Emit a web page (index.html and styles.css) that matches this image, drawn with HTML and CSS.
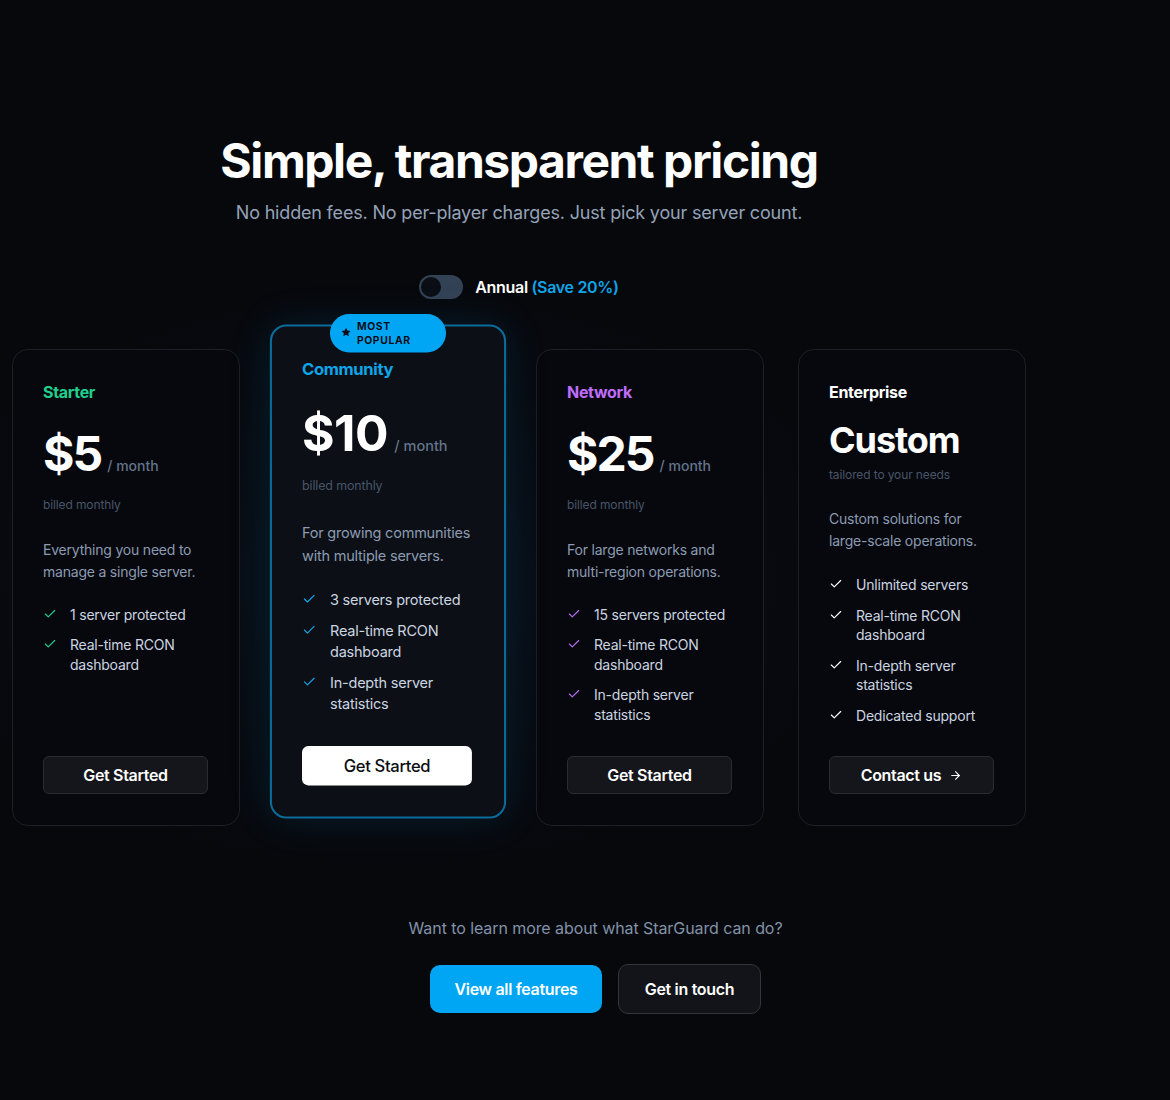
FILE: index.html
```html
<!DOCTYPE html>
<html lang="en">
<head>
<meta charset="utf-8">
<title>Pricing</title>
<link rel="stylesheet" href="styles.css">
</head>
<body>
<main class="page">
  <section class="pricing">
    <header class="intro">
      <h1 class="intro-title">Simple, transparent pricing</h1>
      <p class="intro-sub">No hidden fees. No per-player charges. Just pick your server count.</p>
    </header>

    <div class="billing">
      <span class="switch"><span class="knob"></span></span>
      <span class="billing-label">Annual <span class="save">(Save 20%)</span></span>
    </div>

    <div class="plans">
      <article class="plan plan-starter">
        <h3 class="plan-name">Starter</h3>
        <div class="price-row"><span class="price">$5</span><span class="per">/ month</span></div>
        <p class="billed">billed monthly</p>
        <p class="plan-desc">Everything you need to manage a single server.</p>
        <ul class="features">
          <li><svg class="check" viewBox="0 0 24 24"><polyline points="20 6 9 17 4 12"/></svg><span>1 server protected</span></li>
          <li><svg class="check" viewBox="0 0 24 24"><polyline points="20 6 9 17 4 12"/></svg><span>Real-time RCON dashboard</span></li>
        </ul>
        <a class="btn btn-dark" href="#">Get Started</a>
      </article>

      <article class="plan plan-community">
        <span class="badge"><svg class="star" viewBox="0 0 24 24"><path d="M12 2.5l2.9 6.1 6.6.8-4.9 4.6 1.3 6.6L12 17.3l-5.9 3.3 1.3-6.6-4.9-4.6 6.6-.8z"/></svg><span class="badge-text">Most<br>Popular</span></span>
        <h3 class="plan-name">Community</h3>
        <div class="price-row"><span class="price">$10</span><span class="per">/ month</span></div>
        <p class="billed">billed monthly</p>
        <p class="plan-desc">For growing communities with multiple servers.</p>
        <ul class="features">
          <li><svg class="check" viewBox="0 0 24 24"><polyline points="20 6 9 17 4 12"/></svg><span>3 servers protected</span></li>
          <li><svg class="check" viewBox="0 0 24 24"><polyline points="20 6 9 17 4 12"/></svg><span>Real-time RCON dashboard</span></li>
          <li><svg class="check" viewBox="0 0 24 24"><polyline points="20 6 9 17 4 12"/></svg><span>In-depth server statistics</span></li>
        </ul>
        <a class="btn btn-light" href="#">Get Started</a>
      </article>

      <article class="plan plan-network">
        <h3 class="plan-name">Network</h3>
        <div class="price-row"><span class="price">$25</span><span class="per">/ month</span></div>
        <p class="billed">billed monthly</p>
        <p class="plan-desc">For large networks and multi-region operations.</p>
        <ul class="features">
          <li><svg class="check" viewBox="0 0 24 24"><polyline points="20 6 9 17 4 12"/></svg><span>15 servers protected</span></li>
          <li><svg class="check" viewBox="0 0 24 24"><polyline points="20 6 9 17 4 12"/></svg><span>Real-time RCON dashboard</span></li>
          <li><svg class="check" viewBox="0 0 24 24"><polyline points="20 6 9 17 4 12"/></svg><span>In-depth server statistics</span></li>
        </ul>
        <a class="btn btn-dark" href="#">Get Started</a>
      </article>

      <article class="plan plan-enterprise">
        <h3 class="plan-name">Enterprise</h3>
        <div class="custom">Custom</div>
        <p class="tailored">tailored to your needs</p>
        <p class="plan-desc plan-desc-ent">Custom solutions for large-scale operations.</p>
        <ul class="features features-ent">
          <li><svg class="check" viewBox="0 0 24 24"><polyline points="20 6 9 17 4 12"/></svg><span>Unlimited servers</span></li>
          <li><svg class="check" viewBox="0 0 24 24"><polyline points="20 6 9 17 4 12"/></svg><span>Real-time RCON dashboard</span></li>
          <li><svg class="check" viewBox="0 0 24 24"><polyline points="20 6 9 17 4 12"/></svg><span>In-depth server statistics</span></li>
          <li><svg class="check" viewBox="0 0 24 24"><polyline points="20 6 9 17 4 12"/></svg><span>Dedicated support</span></li>
        </ul>
        <a class="btn btn-dark" href="#">Contact us <svg class="arrow" viewBox="0 0 24 24"><path d="M5 12h14"/><path d="M12 5l7 7-7 7"/></svg></a>
      </article>
    </div>
  </section>

  <section class="cta">
    <p class="cta-text">Want to learn more about what StarGuard can do?</p>
    <div class="cta-actions">
      <a class="cta-btn cta-primary" href="#">View all features</a>
      <a class="cta-btn cta-secondary" href="#">Get in touch</a>
    </div>
  </section>
</main>
</body>
</html>
```

FILE: styles.css
```css
* { box-sizing: border-box; }

html, body {
  margin: 0;
  padding: 0;
  background: #07080c;
}

body {
  font-family: "Inter", "Noto Sans", sans-serif;
  color: #ffffff;
  min-height: 1100px;
}

a { text-decoration: none; }

.page {
  background: radial-gradient(ellipse 700px 420px at 390px 580px, rgba(14, 80, 130, 0.10), rgba(7, 8, 12, 0) 70%), #07080c;
  min-height: 1100px;
}

.pricing {
  width: 1014px;
  margin-left: 12px;
  padding-top: 135px;
}

.intro {
  text-align: center;
}

.intro-title {
  margin: 0;
  font-size: 48px;
  line-height: 52px;
  font-weight: 700;
  letter-spacing: -0.03em;
  color: #ffffff;
}

.intro-sub {
  margin: 12px 0 0;
  font-size: 18px;
  line-height: 28px;
  color: #94a3b8;
  letter-spacing: -0.01em;
}

.billing {
  margin-top: 48px;
  display: flex;
  justify-content: center;
  align-items: center;
  gap: 12px;
}

.switch {
  width: 44px;
  height: 24px;
  border-radius: 12px;
  background: #334155;
  padding: 2px;
  display: flex;
}

.knob {
  width: 20px;
  height: 20px;
  border-radius: 50%;
  background: #0b0e15;
}

.billing-label {
  font-size: 16px;
  font-weight: 600;
  color: #ffffff;
  letter-spacing: -0.02em;
}

.save { color: #0ea5e9; }

.plans {
  margin-top: 50px;
  display: grid;
  grid-template-columns: repeat(4, 228px);
  column-gap: 34px;
}

.plan {
  position: relative;
  display: flex;
  flex-direction: column;
  border: 1px solid #1c1f26;
  border-radius: 16px;
  background: #07080d;
  padding: 30px 30px 31px;
}

.plan-community {
  border: 2px solid #0b6b9a;
  padding: 29px 29px 30px;
  background: #0c0f15;
  transform: translateY(-16px) scale(1.036);
  box-shadow: 0 0 40px rgba(14, 140, 210, 0.14);
  z-index: 1;
}

.badge {
  position: absolute;
  top: -12px;
  left: 50%;
  transform: translateX(-50%);
  width: 112px;
  height: 37px;
  padding: 0 10px 2px;
  border-radius: 19px;
  background: #00a6f4;
  display: flex;
  align-items: center;
  gap: 5px;
  color: #0a0f1a;
}

.star {
  width: 11px;
  height: 11px;
  fill: #0a0f1a;
  flex: none;
}

.badge-text {
  font-size: 10px;
  line-height: 14px;
  font-weight: 700;
  letter-spacing: 0.06em;
  text-transform: uppercase;
}

.plan-name {
  margin: 0;
  font-size: 16px;
  line-height: 24px;
  font-weight: 700;
  letter-spacing: -0.02em;
}

.plan-starter .plan-name { color: #20cf8c; }
.plan-community .plan-name { color: #0ea5e9; }
.plan-network .plan-name { color: #c06cff; }
.plan-enterprise .plan-name { color: #ffffff; }

.price-row {
  margin-top: 16px;
  height: 68px;
  display: flex;
  align-items: baseline;
  gap: 6px;
  line-height: 68px;
}

.price {
  font-size: 48px;
  font-weight: 700;
  letter-spacing: -0.04em;
  color: #ffffff;
}

.plan-community .price { letter-spacing: -0.01em; }

.per {
  font-size: 14px;
  font-weight: 500;
  color: #64748b;
}

.billed, .tailored {
  margin: 9px 0 0;
  font-size: 12px;
  line-height: 16px;
  color: #475569;
  letter-spacing: -0.01em;
}

.custom {
  margin-top: 16px;
  font-size: 36px;
  line-height: 40px;
  font-weight: 700;
  letter-spacing: -0.03em;
  color: #ffffff;
}

.tailored { margin-top: 7px; }

.plan-desc {
  margin: 26px 0 0;
  font-size: 14px;
  line-height: 22px;
  color: #8b9bb2;
  letter-spacing: -0.015em;
}

.plan-desc-ent { margin-top: 25px; }

.features {
  list-style: none;
  margin: 22px 0 0;
  padding: 0;
  display: flex;
  flex-direction: column;
  gap: 10px;
}

.features-ent { margin-top: 23px; gap: 11px; }

.features li {
  display: flex;
  align-items: flex-start;
  gap: 13px;
  font-size: 14px;
  line-height: 20px;
  color: #cbd5e1;
  letter-spacing: -0.015em;
}

.features-ent li { line-height: 19.5px; }

.check {
  width: 14px;
  height: 14px;
  margin-top: 2px;
  flex: none;
  fill: none;
  stroke-width: 2;
  stroke-linecap: round;
  stroke-linejoin: round;
}

.plan-starter .check { stroke: #20cf8c; }
.plan-community .check { stroke: #0ea5e9; }
.plan-network .check { stroke: #b36ef0; }
.plan-enterprise .check { stroke: #ffffff; }

.btn {
  margin-top: auto;
  height: 38px;
  width: 165px;
  border-radius: 6px;
  display: flex;
  align-items: center;
  justify-content: center;
  gap: 8px;
  font-size: 16px;
  font-weight: 600;
  letter-spacing: -0.02em;
}

.plan-enterprise .features { margin-bottom: 31px; }

.btn-dark {
  background: #15161b;
  border: 1px solid #2a2c33;
  color: #ffffff;
}

.btn-light {
  background: #ffffff;
  color: #0b0d12;
  font-weight: 500;
  width: 164px;
}

.arrow {
  width: 13px;
  height: 13px;
  fill: none;
  stroke: #ffffff;
  stroke-width: 2;
  stroke-linecap: round;
  stroke-linejoin: round;
}

.cta {
  margin-top: 90px;
  padding-left: 21px;
  text-align: center;
}

.cta-text {
  margin: 0;
  font-size: 16px;
  line-height: 24px;
  color: #8292a8;
  letter-spacing: -0.005em;
}

.cta-actions {
  margin-top: 24px;
  display: flex;
  justify-content: center;
  align-items: center;
  gap: 16px;
}

.cta-btn {
  display: flex;
  align-items: center;
  justify-content: center;
  border-radius: 10px;
  font-size: 16px;
  font-weight: 600;
  letter-spacing: -0.02em;
  color: #ffffff;
}

.cta-primary {
  height: 48px;
  width: 172px;
  background: #00a6f4;
}

.cta-secondary {
  height: 50px;
  width: 143px;
  background: #131419;
  border: 1px solid #33353c;
}
```
